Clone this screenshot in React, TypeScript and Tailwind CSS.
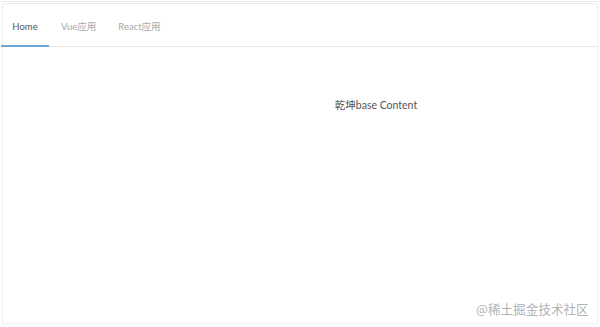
import React from "react";

export default function App() {
  return (
    <div className="w-[600px] h-[327px] bg-white relative overflow-hidden" style={{ fontFamily: "Lato, 'Noto Sans CJK SC', sans-serif" }}>
      <div className="absolute left-0 top-[1px] w-full h-px bg-[#ededed]" />
      <div className="absolute left-[2px] top-[3px] bottom-[3px] right-[2px] border border-[#efefef]">
        <div className="flex items-end h-[43px] border-b border-[#e6e6e6]">
          <div className="relative w-[48px] h-full flex items-center justify-center text-[9.5px] text-[#555] pt-[4px] -ml-[2px]">
            Home
            <div className="absolute left-0 right-0 -bottom-px h-[2px] bg-[#6aa5d3]" />
          </div>
          <div className="h-full flex items-center text-[9.5px] text-[#a8a8a8] pt-[4px] ml-[12px]">Vue应用</div>
          <div className="h-full flex items-center text-[9.5px] text-[#a8a8a8] pt-[4px] ml-[22px]">React应用</div>
        </div>
        <div className="flex">
          <div className="w-[152px]" />
          <div className="flex-1 flex justify-center pt-[51px] text-[10.5px] text-[#555]">乾坤base Content</div>
        </div>
      </div>
      <div className="absolute left-[476px] top-[300px] text-[12.6px] text-[#b3b3b3]" style={{ fontFamily: "'Noto Sans CJK SC', sans-serif" }}>@稀土掘金技术社区</div>
    </div>
  );
}
